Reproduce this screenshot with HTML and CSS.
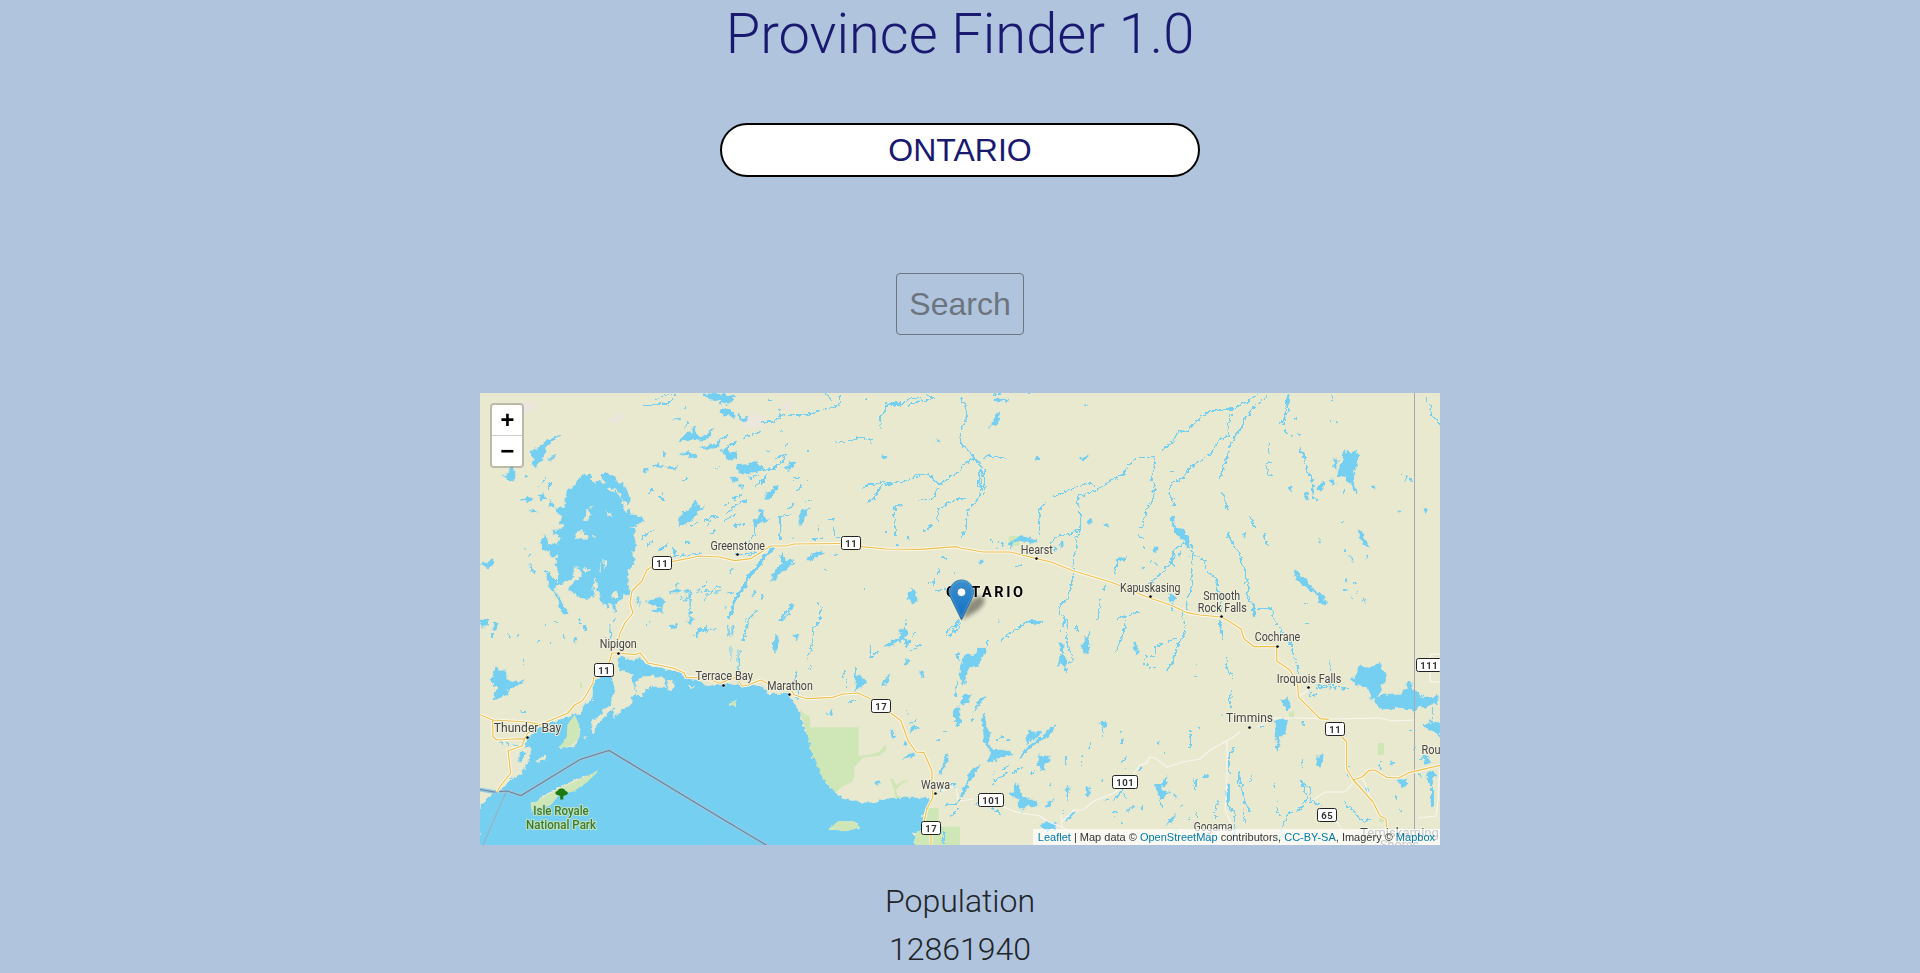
FILE: index.html
```html
<!DOCTYPE html>
<html lang="en">
<head>
<meta charset="utf-8">
<title>Province Finder 1.0</title>
<link rel="stylesheet" href="styles.css">
</head>
<body>
<main class="page">
  <h1 class="title">Province Finder 1.0</h1>
  <input class="province" type="text" value="ONTARIO" aria-label="Province">
  <button class="search" type="button">Search</button>
  <div class="map">
    <svg class="tiles" viewBox="480 393 960 452" width="960" height="452">
      <defs>
        <linearGradient id="pin" x1="0" y1="0" x2="0" y2="1"><stop offset="0" stop-color="#3b8fcb"/><stop offset="1" stop-color="#126fc6"/></linearGradient>
        <linearGradient id="rim" x1="0" y1="0" x2="0" y2="1"><stop offset="0" stop-color="#3883b7"/><stop offset="1" stop-color="#2e6c97"/></linearGradient>
        <filter id="soft" x="-50%" y="-50%" width="200%" height="200%"><feGaussianBlur stdDeviation="2.2"/></filter>
        <filter id="shore" filterUnits="userSpaceOnUse" x="470" y="383" width="980" height="472" color-interpolation-filters="sRGB">
          <feTurbulence type="fractalNoise" baseFrequency=".22" numOctaves="2" seed="4" result="n"/>
          <feDisplacementMap in="SourceGraphic" in2="n" scale="6" xChannelSelector="R" yChannelSelector="G"/>
        </filter>
      </defs>
      <!-- faint terrain patches -->
      <g class="rock">
        <path d="M508 407l22-6 8 5-14 9zM607 421l14-8 4 4-10 8zM743 422l12-10 9 6-2 9-18 1zM781 406l12-8-3 14z"/>
      </g>
      <!-- parks -->
      <g class="park">
        <path transform="translate(720 620) scale(.33333)" d="M240 272L270 292V322H416V408L450 404 476 396 494 376 500 378 496 394 476 408 430 412 404 440 402 460 404 470 396 486 366 500 346 518 310 480 280 430 262 350zM583 675L580 650 604 628 608 590 624 564H656V620H720V675zM510 478L520 476 526 490 530 496 548 482 568 480 548 490 532 504 528 512 534 528 560 534H526L522 510z"/>
        <path d="M1009 536h10v10h-10zM1378 743h6v12h-6zM1289 713l5-2v7l-5-1zM1379 818h5v4h-5z"/>
      </g>
      <g class="water" filter="url(#shore)">
        <!-- north-west -->
        <g transform="translate(480 390) scale(.33333)">
          <path class="a" fill-rule="evenodd" d="M300 262L310 252 332 256 336 276 346 280 350 270 384 284 384 300 398 308 404 302 414 314 422 320 428 340 432 352 434 374 444 358 454 374 484 380 492 396 464 404 468 412 440 414 468 418 460 440 468 464 464 480 456 484 464 506 460 520 444 548 444 584 450 606 448 616 434 610 424 628 416 632 408 640 404 666 394 644 386 636 382 656 370 638 358 626 360 606 350 600 354 580 342 560 340 600 344 616 320 628 296 620 266 598 284 572 306 560 304 540 286 530 280 560 260 574 238 580 226 590 222 606 240 620 252 650 270 674 248 672 240 650 234 624 220 602 204 590 204 564 196 544 210 546 218 566 232 580 236 540 228 512 234 496 214 500 206 484 184 480 184 456 192 434 200 440 204 466 218 458 232 466 240 440 220 430 218 420 248 420 254 404 240 396 244 374 226 368 228 354 250 352 258 328 262 296 282 286zM318 366l4-10h8l2 20-10 16-8-2zM376 364l14 6 8 8-2 6-18-12zM284 432l18-18 4 12 20 10-4 14h-16l-4-6h-16zM360 520h6l-4 26h-4zM370 510h12v16l-10 16zM392 610l20-6 4 14-10 8-14-6zM310 530l14 4 6 8-14 8zM336 438h8v6h-8zM330 350h8v6h-8z"/>
          <path class="a" d="M368 264L366 250 388 250 406 262 408 274 434 284 444 312 452 334 446 342 432 336 424 316 410 302 384 290z"/>
          <path class="a" d="M148 188l28-14 22-22 46-18-34 24-14 18-4 24-14 12-12 22-10-6 4-28zM204 216l8-18 16-4-8 14zM66 256l20-6 8-20 8 6 4 20-4 18-16-4zM124 330l20-12 16 10-14 8zM176 320l10-10 12 12-16 8zM206 350l4-22 12 14v12zM150 368l12-10 8 6zM2 522l20-4 12-10 6 14-16 12zM148 520l8 14 8 14-10-4zM490 240l12-6v12l-8 4zM520 230l16-10 16 8-14 4zM556 232h36l-16 4zM596 192l34-8 22 14-6 8zM598 406v-20l12-22 18-4 14-26 14 10 0 12 18-6-30 26-22 26zM596 152l22-22 16-6 4-14 10-4-2 24 16 14 36-26-10 22-22 14-22-8-22 6zM664 172l30-6 26-16v22l-34 4zM668 12l52-2v24l-32-8zM496 634l30-6 14-8 14 12-8 20 6 18-16-4-18-2 22-12-22-8zM568 608l12-4 10-10 14 8-20 8zM470 622l8 4-6 16zM620 620l4 10-10 2zM578 90l24-10-4 10z"/>
          <path class="b" d="M486 46h30l52-6 20-26M526 26l36-12h24M552 182v20M504 314l16-18M552 306l-14 14 16 12M604 270l18-8M484 446l34-26M500 466l20-10M534 482l26-16M582 470v26h40l44-6M632 598v90M680 574l-10 24M664 606l24-6M688 610l12-14 20-6M606 404l20-12M634 408l18-12M670 394l30-14 20 2M684 402l16-8M690 434l14-12M606 120l20-26M616 48v8M172 290l6 14M188 284l8-22M206 300l6-22M308 188h8M138 256v12M152 492v8M134 474v8M2 568h6M706 240l14-10M616 456h14"/>
        </g>
        <!-- north -->
        <g transform="translate(720 390) scale(.33333)">
          <path class="a" d="M0 14l30 4 14 0-8 14-20 10-16-4zM6 180l16-6 8 16 20-6v20l-16 6-16-4zM46 236l10-14 22 2 30-12 8 14 24 12-36 8-22 6-24-2zM0 56l22 2 20 10 4 14-20-6-14 4zM54 88v-20l12 16 18-2-6 14zM134 330v-14l18-12 12-16 12 2-24 36zM192 232l18-14 18-2-10 14-12 14zM236 408l2-30 10-22 8 4 12-8-14 28-8 22zM262 510l10-18 30-6 14 2-24 12-18 10zM34 262l10-4 8 14-14 4zM54 284h14v14zM486 194l14 2v8l-10 4zM564 610l12-14 12 10 4 30-14 6-14-18zM650 150l12 4-4 8zM160 560l8-20 18-20-4-20 8-10 6 22 22-4-10 14 22-4-30 18-16 10-12 14zM100 408l4-20 14-8v-20l12 4-2 20 18 4-20 8-18 12z"/>
          <path class="c" d="M160 472l-24 24-30 44-22 22-12 30-24 30-14 42-10 22"/>
          <path class="b" d="M120 96h40l26-18 70-4 50-10 18-12 32-6 6-32M72 142l30-8 22-10M0 148l26-14M14 176l36-22M136 184h10M172 134l14-14M178 86V54M200 158v14M264 182v6M168 204l34-14-30 44M116 240l50-4 8-12M88 264l26-10M124 280l20-26M106 286l20-16M222 268l20-6M234 300l10-18M254 272h10M38 330l28-16M14 346l14-6M18 370l40-34 20-4M14 396l30-24M42 410l32-8M104 392v40l-22 30M180 376v72M176 380l34-4M204 356l16-16M258 334h14M324 394l20-8M296 400v24M276 448l30-4M344 412v30h20M212 446h14M308 538h14M342 498l14-8M126 628v-16M82 688l28-28M182 688l34-48-10 40M292 640l12 12-4 34M324 12l8 20M140 32h14M344 158h26M388 152l34-10 32 8v10M500 36l-4 28-16 18 2 40M500 42h40l40-20h24M560 50l22-12 50-10M616 10l28 16M436 26h8M428 298l12-12 40-10 38 6 42-10 40-18h30l26 32 28-22 34-18M516 284l-36 4-16 38-22 8M652 294l-8 26-10 8h-40M720 326l-30 10-38 22v38M636 408l-26 14M548 342l-22 6-4 30 6 60M532 456v10M564 440v10M498 422v10M656 538v16M704 540v16M640 566v20M624 578h10M644 604l36-8M434 590v14M46 492l48 2 20-12M180 496l14 20M664 506h14M556 688h6"/>
        </g>
        <!-- north-centre -->
        <g transform="translate(960 390) scale(.33333)">
          <path class="a" d="M82 114l20-16 6-26 12-8-6 34zM148 458l14-10 20-4 4-6 16 6 28 4v8l-36-2-28 2-14 10zM298 460l10-6 4 16-12 4zM384 388h12v10l-10 2zM432 404h16v10h-8zM468 508l36-12-12 14-20 8zM632 382l8-6 6 6-2 30 24 8 18 24 0 26-10-6-6-18-22-14-8-20zM576 474h16l-6 12zM584 518h8v10zM626 604l14 10 8 12-14 8-6-12zM54 516l14-4v10zM226 202h10v8h-10zM360 208l20-12 6 2-14 12zM98 28h50l-8 4h-36zM280 474l12 2-6 8z"/>
          <path class="b" d="M0 26l20 16-2 46-16 30 0 40 40 44 24 24-4 86-8 14-32 38-4 46-14 30M42 204l-30 18-12 18M60 240l-8 50M72 240l2 76M48 290h34M66 204l24-6 44 4M0 324h20M36 206l20 14M372 50l10-4M284 318l44-18 60-22 18 8M410 302l-52 14-6 22 8 26v50l-10 30-2 30-8 30 2 40-6 30-8 50-30 22 2 26 22 20v24M410 302l40-28 40-20 14-26 28-26h52v20l-8 50 10 20-14 50-14 16-6 30-10 26M256 340l-18 20 0 74M360 418l-20 10-56 14-10 20M100 14l22-2M206 10h8M606 182l32-26 16-30 26-4 42-38M720 214l-30 18-24 34-30 12-8 24 14 46M634 244h10M538 426v14h10M548 474h8M574 514v4M546 534h8M472 520l-10 36M676 458l-32 18-10 40 8 10M692 460l6 50-4 90-10 20-6 40M698 500h22M648 500l-16 16-30 36-36 30M660 490l4 14M436 586l-8 18M418 628v34l-6 24M470 688l30-12 44-12M92 450l8 12M112 434l0 44M130 454v14M150 458v16M172 528l12-4M636 640v20M668 660v28M110 688h8"/>
        </g>
        <!-- north-east -->
        <g transform="translate(1200 390) scale(.33333)">
          <path class="a" d="M412 258l6-26 12-16v-32l6-8 0 18 8-14 8 8 4 4 14-12 4 20-2 30-10 8-2 40 10 18-2 18-6-8-6-22-14-8v-20l-8 4zM400 232l4-26 8 4-4 30zM390 268l10-4 4 14-6 12zM354 290l12-16 6 4-4 16-8 14-6-6zM312 304l8 2 6 24-8 4zM474 416l8 8 10 14 14 34-12-4-12-22zM282 542l10 4 8 10 18 12 16 22 12 10 4 12 12-8 10 20 6 18-14 2-8-10v-14l-28-20-18-14-20-16zM264 292h12v12h-8zM434 476h6v14l-8-2zM448 496l12 16v6zM354 444l6 14h6zM514 288h10v8h-8zM594 360h8v6h-8zM672 356h10v8h-10zM126 432l10-4v16zM490 628l6 4v10z"/>
          <path class="b" d="M0 80l28-14 36-8 38-2 38-20 32-24M202 14l-36 36-30 34-16 34-34 54-6 40-18 40-6 18M92 68l-6 30v36l-30 20-26 38-30 20M264 12l-8 42-4 48M264 12v54l-26 38M394 14l6 20M388 88v12M408 94h6M284 84l8 10M256 120v12M276 138l6-2M288 122l12 16M204 164l10 28M212 214l-14 8 6 32h18M296 172l18 24 6 50 14 14 6 30-2 30 8 10h8M64 298l10 30 10 34M150 380l18 34M190 432l10 30 8 10M222 478h6M82 430l20 40 18 20 8 36 10 16v36l6 20-2 24 20 22v36M84 428v12M168 658l42-4 10 14v20M0 508l16 4 4 36 20 12 14 20-2 20 12 20v40M136 560l10 10v40M158 640v40M426 402l8-16M432 296v16M604 248v10M624 254l-10 24M630 270h6M672 12l16 28 6 30 26 34M436 566v14M430 600h14M460 576l8 6M470 600v14M456 620v8M498 498v8M312 642l12-6"/>
        </g>
        <!-- lakes north of the Superior shore -->
        <g transform="translate(600 393) scale(.33333)">
          <path class="a" d="M262 690l10-22 8 12-6 16zM524 780l-4-26 8-24 6 20-4 20zM582 728l10-4v16zM252 594l10-6 6 8-8 10zM508 566l10-16 12-14 0 22z"/>
          <path class="b" d="M226 580l10-10M240 622l8-14M292 600l8-14M312 620l20-24M340 590l20-14M386 540l12-10M380 600h20M220 690l12 8M286 736l8-20 24-4M320 712l28-8M455 614l12-22M378 640l-5 8M472 650l-28 34-16 64M576 630l-12 34-24 20M120 625v14M30 690v30M392 760v40M414 770v50l4 50M385 700v30l12-6v-26M150 690v-8M344 604l16-16M270 590v80"/>
        </g>
        <!-- south-west -->
        <g transform="translate(480 620) scale(.33333)">
          <path class="a" fill-rule="evenodd" d="M0 680V556L36 526 66 510 92 480 120 464 138 440 150 412 156 384 144 376 130 382 148 350 180 322 240 300 280 284 284 310 298 330 296 350 290 372 272 382 236 384 262 354 268 330 268 318 284 284 306 280 312 256 336 238 340 220 336 190 350 176 372 170 388 156 392 164 402 200 404 216 392 240 392 254 372 266 356 290 336 306 332 328 340 342 352 318 366 300 392 268 404 264 398 296 408 290 420 274 440 262 458 250 456 232 466 222 468 196 456 176 460 164 440 156 420 146 414 118 430 110 434 118 460 122 478 112 492 130 530 142 574 150 608 160 614 178 650 180 682 200 720 192V680zM466 186L480 170 520 166 556 176 560 204 530 204 512 198 490 218 484 230 468 228zM562 180L576 178 586 200 580 212 560 206zM168 418L194 406 200 418 172 426zM308 362L320 348 318 360zM156 574L152 552 212 514 270 486 356 452 322 486 282 514 238 524 212 556zM624 196l34 6-30 4z"/>
          <path class="a" d="M48 138l10 14h20l2 24 24 12 32-10-26 20-26 12 0 18-20 0-24 14 2-20 10-14-18-24zM110 426l16-30 12 4-16 28zM0 0h24l-10 24-12-6zM40 6l14 6-2 20-10-6zM278 56h12l-4 12zM568 16h22v8h-12zM620 4h16v12z"/>
          <path class="b" d="M224 4h16M196 12v8M250 46l8 10M212 66v10M174 58v12M80 40l12 8M110 48h10M36 40v12M130 120v14M122 276h12M300 0l4 16M314 14l2 20M392 30v24M380 50v20M404 0v10M646 54l8-24 26-6M500 10v18M50 368l40 4M100 374l26 6"/>
        </g>
        <!-- south -->
        <g transform="translate(720 620) scale(.33333)">
          <path class="a" fill-rule="evenodd" d="M-2 190L60 196 100 192 140 212 144 224 200 220 212 236 230 262 240 278 246 310 262 350 274 400 290 436 310 480 346 518 372 538 420 548 470 548 500 536 550 534H624L636 544 610 578 604 628 580 640 584 682H-2zM26 252l10-10 14 2-4 16zM326 628l28-24h48l18 18-40 12z"/>
          <path class="a" d="M408 180l6-16 8 10 18 4-4 14-24 14-8 14zM492 78l26-16 24-6-4-24 10-2 8-8 6 8-4 28-22 4-20 16zM162 96l-2-26 10-26 4 20-2 20zM484 200l10-24 16-12-14 34zM602 148l8 4 2 22-8-4zM512 334h12l0 20h-8zM550 372l10-6v12zM544 416l20-12 26-8-12 14zM570 336l8-18 18 4zM312 284l16-4 8-14v18zM462 486l14-4 4 8-12 4zM656 466l12-26 4-22 10-24v30l-12 26zM700 276l8-14 12 2v50l-10 4zM556 50v30l16-12zM552 130l10-16 2 20zM220 48l10-4v16z"/>
          <path class="b" d="M82 0l-6 30-4 34M60 94l-4 46M296 4l-16 20-4 56-16 34M268 134v12M274 76v20M228 160v20l8 44-4 20M376 150l-6 20M380 180v24M408 142v40M384 248l20-8M452 74v36l20-14M556 10v16M584 36l-10 18M582 76h24M572 90l20-4M676 54l44-34M706 20l14-8M714 100v20M714 182l-10 50M584 290h10M562 270v14M648 360l10-4M668 334h16M574 310l14-12M520 256h10M676 556l28-4 14-12M690 594l26-30M660 512l30-22 20 10M664 624v14h8v34"/>
        </g>
        <!-- south-centre -->
        <g transform="translate(960 620) scale(.33333)">
          <path class="a" d="M0 150l8-18v-20l16-10 18 4 12-20 26-2-6 18-14 18-2 18-20 0-16 16-8 20 6 18h-12l-8-20zM294 136l8-30-2-36 10 4-2 26 12 24-10 16-6-10zM362 76l10-6 6-20 10 10 2 20-10 22-8-6zM520 68l10-2 4 40-8-8zM0 250l12-24 20-4-8 20-16 16zM40 280l20-48 20-2-20 22zM66 282l8-4 4 40 12 22-4 34 16 14 48 6 8 10-20 4-30 4-8 14-20-4 14-20-12-22-10-14zM180 416l20-34 50-34 20-20 20-16-18 30-24 16-36 24zM198 374l0-18 10-30 10 14 30-8-16 20-20 10zM0 530l10-24 10-20 6-26 36-28-20 36-14 14-12 40zM230 430l10-28 6 10 22-4v18l-14 6-6 22-10-14zM150 518l16-4v-26l12 14-2 18 20 12 38 14v12l-34-2-22 14-4-14 6-20-24-4zM420 308l18-4v12l-10 8zM376 524l6-26 10 4-6 30zM582 494h20l18-24 0 20-16 14 10 14 16-6-24 22-6 0zM312 610l18-30 20-8-20 26zM258 562l10-16 14-10-10 20zM244 620l12-10 10-8 20 8 4 20-16-8-12 12zM314 500h14v18l-12-4zM618 616l14-20 14-14-10 24zM534 456l8-16 4 6zM640 520l10 14h-8zM498 574l20-20-8 20z"/>
          <path class="b" d="M0-2l-6 10-38 34M122 62l20-16 40-26 10-14h54M110 10l10-8M84 60v14M312 0v14l-8 18M316 40l10 50 12 24-14 26M348 16l6 16M390 30l-6 30M498 0l-6 34-16 40-10 26M672 0l4 40-20 30-14 30v20l-20 36M648 52l-22 12M610 74l-24 4v24M556 108v8M574 106h12M552 132l12-4M568 144l20-4M708 134h12M706 170h8M318 140v18M0 300v14M34 300h14M110 360l20-8M144 354v10M92 420l20-4M130 446l16-14M156 460l34-20M96 494l16-20 18-6 12-14M100 452v16M98 564l24 20M176 578h14M368 408v30M320 404v30M384 382l10-14M428 314v34M480 330v10M486 358v14M484 428l20-22M488 446h10M426 480v6M462 542l26-34M492 516l6 20M214 460l8-4M266 500l10-6M322 494v50M314 570v10M436 538h12M456 578h18M462 584v4M482 610h12M516 560h6M546 556v12M602 530v40M692 330v50l-8 4M710 324h8M614 406v-12M590 372h8M700 474v30l12 8M708 480v20M664 556h6M710 574v20M644 630h16M686 590l10 10M42 554l12-8"/>
        </g>
        <!-- south-east -->
        <g transform="translate(1200 620) scale(.33333)">
          <path class="a" d="M452 182L472 164 474 142 484 132 498 146 510 138 540 130 544 146 558 164 554 188 540 198 544 210 530 228 548 226 574 222 598 226 604 212 620 208V190L630 180 640 210 664 224 674 236 712 224V250L690 254 680 264 660 254 648 266 640 274 620 268 600 262 566 270 530 262 526 236 512 238 510 208 488 202zM226 304l14-8 26 2-4 20-10 26-14 6v24l-6 20v-30l-8-18zM242 240l20-10 8 20-4 22-14-12zM348 436l6-30 16-4-2 22-8 14zM590 476l30 0v18l-12 12zM672 316l20-4-2-10 30 10v40l-14-14zM678 460l20-8 10 10-14 40zM492 506l14-2v12h-8zM568 428l16-2-2 8zM668 404l14 4 8 20-16 6z"/>
          <path class="b" d="M58 0l10 46v14M222 0l20 30 24 20 14 54 14 40-4 22M384 122l10 30 6 16M80 108v34l18 24v6M98 206l-10 34 6 20M180 322l10-4M330 210l2 20 24-14M350 196l40-4 20 10 36 4M350 202l40-2 20 8M316 10h10M0 130M306 306l10 8M540 430v20M630 326v8M700 260v44M640 378v16M696 500v60M104 380l-10 14-10 20M88 400v66M84 490v60l20 26v40l-10 50M80 520l12 60M114 454l8 30 14 70 18 18M116 454v40l10 10M148 490l10-24M224 486v20M232 546v40h8M58 540l-16 34 6 20M304 420v24M306 484l14 50-26 40h-22M310 490l22 20v34M250 620l10-30 12-16M244 620v30l-10 20M334 544l30 14M432 544l36 40 26 22 18-10M600 572h14M588 526v10M10 468h16M28 356v14M62 284h8M446 438v30M130 560v34l10 16M228 650h10M656 418l24-6M654 460l10 14"/>
        </g>
      </g>
      <g class="park" transform="translate(480 620) scale(.33333)">
        <path d="M284 284L298 314 296 354 272 378 236 384 260 354 262 314zM156 574L152 554 212 520 270 492 356 452 322 486 282 514 238 524 212 556zM300 185h6v20h-6zM745 252l20-8 4 14zM1046 628l28-24h48l18 18-40 12z"/>
      </g>
      <!-- borders -->
      <path class="border-halo" d="M480 789.500L494 792 507 791 521 795.500 580 759.500 609 750.500 720 817.500 767 845.500"/>
      <path class="border" d="M480 789.500L494 792 507 791 521 795.500 580 759.500 609 750.500 720 817.500 767 845.500"/>
      <path class="border faint" d="M506 792L483 845M1414.500 393V845"/>
      <!-- minor roads -->
      <path class="minor" d="M960 801L973 799M1004 807L1016 812 1040 816 1049 822 1064 828 1080 840M1062 828L1061 815M1062 822L1074 810 1083 810 1094 801 1112 794 1120 789M1132 776L1140 765 1147 763 1149 757 1155 758 1167 767 1183 762 1200 759 1210 750 1232 738 1240 732M1257 727L1275 718 1300 718 1330 719 1380 718 1392 721 1414 720M1313 800L1325 792 1345 792 1353 783M1363 778L1371 800M1227 740V780L1225 810 1232 825M1331 814L1342 829M942 791L956 786 958 800M1440 654H1430V682H1440M1440 768L1438 800 1436 816 1418 818M1299 696L1309 690"/>
      <!-- highways -->
      <g class="road-group">
        <g id="roads">
          <path d="M480 714.700L492.700 720 493 737 497 740 513 739 524.700 738.700M492.700 720L528 722 540 724.700M524.700 738.700L528 733 540 724.700 568 713 574.700 705 582 701 585 697 593 683 594 677M524.700 738.700L522 746 508 750.700 510.700 773 500 786.700 496.700 792M609 663L612 653 619 653 635 654.700 640 652.700 648 663 673 668 684 672.700 686 677.300 705 678 720 683.300 736 677 742 686 748 685 761 680 770 685 790 688 794 694.700 806.700 698.700 833 697.300 843 694 858 693 871 699M890.700 713L901 720.700 908 740.700 916 752 924 752.700 932 770.700 932 786.700 933 796.700 927 808.700 924 821M931 835V845"/>
          <path d="M618 643L620 633 625 623 633 613 630 603 632 591 642 581 646.700 570 652 566.700M672 561.700L700 556 720 557 734.700 560.700 750.700 558.700 770.700 546 786.700 546 794 544 840 543.500M861 546.700L886.700 549 920 549.300 956.700 546.700 960 548 983 552 1010 552 1036.700 558.700 1051 562 1073 570.700 1113 582.700 1127 589 1150 598 1173 606 1187 612.700 1200 615 1221 617 1227 620 1241 629 1244 638.700 1254 646.700H1276.700V661L1290 670 1297.300 683 1298.700 697.300 1320 718.700 1328.700 719.300M1342 737L1346.700 742V768.700L1353.300 780 1373 802 1380 816 1386 819 1386.700 830M1353.300 780L1362 777 1368.700 770.700 1374.700 770 1386.700 777.300 1398.700 778 1408.700 772.700 1440 765.300"/>
        </g>
        <use class="core" href="#roads"/>
      </g>
      <!-- route shields -->
      <g class="shield">
        <rect x="652.500" y="556.500" width="19" height="13" rx="2"/><text x="662.300" y="566.700">11</text>
        <rect x="841.500" y="536.500" width="19" height="13" rx="2"/><text x="851.300" y="546.700">11</text>
        <rect x="594.500" y="663.500" width="19" height="13" rx="2"/><text x="604.300" y="673.700">11</text>
        <rect x="871.500" y="699.500" width="19" height="13" rx="2"/><text x="881.300" y="709.700">17</text>
        <rect x="921.500" y="821.500" width="19" height="13" rx="2"/><text x="931.300" y="831.700">17</text>
        <rect x="978.500" y="793.500" width="25" height="13" rx="2"/><text x="991.300" y="803.700">101</text>
        <rect x="1112.500" y="775.500" width="25" height="13" rx="2"/><text x="1125.300" y="785.700">101</text>
        <rect x="1325.500" y="722.500" width="19" height="13" rx="2"/><text x="1335.300" y="732.700">11</text>
        <rect x="1317.500" y="808.500" width="19" height="13" rx="2"/><text x="1327.300" y="818.700">65</text>
        <rect x="1416.500" y="658.500" width="25" height="13" rx="2"/><text x="1429.300" y="668.700">111</text>
      </g>
      <!-- places -->
      <g class="place">
        <text x="737.700" y="550" textLength="54.500" lengthAdjust="spacingAndGlyphs">Greenstone</text>
        <text x="1036.800" y="553.700" textLength="32" lengthAdjust="spacingAndGlyphs">Hearst</text>
        <text x="1150.300" y="592" textLength="60.500" lengthAdjust="spacingAndGlyphs">Kapuskasing</text>
        <text x="1221.700" y="599.700" textLength="37" lengthAdjust="spacingAndGlyphs">Smooth</text>
        <text x="1222.300" y="611.700" textLength="49" lengthAdjust="spacingAndGlyphs">Rock Falls</text>
        <text x="618.300" y="648" textLength="37" lengthAdjust="spacingAndGlyphs">Nipigon</text>
        <text x="724.200" y="680.300" textLength="57.500" lengthAdjust="spacingAndGlyphs">Terrace Bay</text>
        <text x="790" y="689.700" textLength="45.500" lengthAdjust="spacingAndGlyphs">Marathon</text>
        <text class="city" x="527.500" y="731.700" textLength="67.500" lengthAdjust="spacingAndGlyphs">Thunder Bay</text>
        <text x="935.500" y="788.700" textLength="29" lengthAdjust="spacingAndGlyphs">Wawa</text>
        <text x="1277.500" y="641" textLength="45.500" lengthAdjust="spacingAndGlyphs">Cochrane</text>
        <text x="1309" y="682.700" textLength="64.500" lengthAdjust="spacingAndGlyphs">Iroquois Falls</text>
        <text class="city" x="1249.500" y="722" textLength="47" lengthAdjust="spacingAndGlyphs">Timmins</text>
        <text x="1431" y="754.300" textLength="19" lengthAdjust="spacingAndGlyphs">Rou</text>
        <text x="1213.200" y="831.300" textLength="39" lengthAdjust="spacingAndGlyphs">Gogama</text>
        <text class="city" x="1399.500" y="836.500" textLength="79" lengthAdjust="spacingAndGlyphs">Temiskaming</text>
        <text class="city" x="1399.500" y="849" textLength="39" lengthAdjust="spacingAndGlyphs">Shores</text>
        <text class="green" x="561" y="815" textLength="55.500" lengthAdjust="spacingAndGlyphs">Isle Royale</text>
        <text class="green" x="561" y="829.300" textLength="70" lengthAdjust="spacingAndGlyphs">National Park</text>
        <text class="region" x="984.500" y="597" textLength="77">ONTARIO</text>
      </g>
      <path class="tree" d="M560.200 799.500v-3.500l-2.700-1c-3-.5-2.500-4 0-4 .5-2 2.500-2.500 4-2.500s3.500.5 4 2.500c3 .5 3 3.500.5 4l-2.700 1v3.500z"/>
      <g class="dots">
        <circle cx="737.500" cy="554.500" r="1.600"/><circle cx="1036.500" cy="558.500" r="1.600"/><circle cx="1150.500" cy="596.500" r="1.600"/><circle cx="1221.500" cy="616.500" r="1.600"/><circle cx="618.500" cy="653.500" r="1.600"/><circle cx="723.500" cy="685.500" r="1.600"/><circle cx="789.500" cy="694.500" r="1.600"/><circle cx="527.500" cy="737.500" r="1.600"/><circle cx="935.500" cy="793.500" r="1.600"/><circle cx="1277.500" cy="646.500" r="1.600"/><circle cx="1308.500" cy="687.500" r="1.600"/><circle cx="1249.500" cy="727.500" r="1.600"/>
      </g>
      <!-- marker -->
      <path class="shadow" filter="url(#soft)" d="M962 620l5-14c5-8 13-12 17-8 3 4-4 12-12 16z"/>
      <g transform="translate(949 579.500)">
        <path fill="url(#pin)" stroke="url(#rim)" d="M12.500.500C5.900.500.500 6 .500 12.800c0 3 1 5 2.200 7.500L12.500 40.300l9.800-20c1.200-2.500 2.200-4.500 2.200-7.500C24.500 6 19.100.500 12.500.500z"/>
        <path class="glint" d="M12.500 1.700C6.600 1.700 1.700 6.600 1.700 12.800c0 2.700.9 4.500 2.100 7l8.700 17.700 8.700-17.700c1.200-2.500 2.100-4.300 2.100-7C23.300 6.600 18.400 1.700 12.500 1.700z"/>
        <circle class="hole" cx="12.500" cy="12.700" r="4.300"/>
      </g>
    </svg>
    <div class="zoom">
      <a class="zoom-btn">+</a>
      <a class="zoom-btn">−</a>
    </div>
    <div class="attribution"><a>Leaflet</a> | Map data © <a>OpenStreetMap</a> contributors, <a>CC-BY-SA</a>, Imagery © <a>Mapbox</a></div>
  </div>
  <div class="stats">
    <p>Population</p>
    <p>12861940</p>
  </div>
</main>
</body>
</html>
```
FILE: styles.css
```css
* { box-sizing: border-box; }
html, body { height: 100%; }
body {
  margin: 0;
  overflow: hidden;
  background: #b0c4de;
  color: #212529;
  font-family: Roboto, sans-serif;
  font-weight: 300;
}
.page { display: flex; flex-direction: column; align-items: center; }
.title {
  margin: 0 0 54px;
  color: #191970;
  font-size: 56px;
  font-weight: 300;
  line-height: 69px;
}
.province {
  width: 480px;
  height: 54px;
  padding: 0;
  border: 2px solid #000;
  border-radius: 27px;
  background: #fff;
  color: #191970;
  font: 32px "Liberation Sans", sans-serif;
  text-align: center;
}
.search {
  height: 62px;
  margin: 96px 0 58px;
  padding: 6px 12px;
  border: 1px solid #6c757d;
  border-radius: 4px;
  background: transparent;
  color: #6c757d;
  font: 32px/48px "Liberation Sans", sans-serif;
}
.map {
  position: relative;
  width: 960px;
  height: 452px;
  overflow: hidden;
  background: #e9e9d0;
}
.tiles { display: block; }

.rock { fill: #ece6dc; }
.park { fill: #cfe7b6; }
.water { shape-rendering: crispEdges; stroke-linejoin: round; }
.water .a { fill: #75cff0; stroke: #75cff0; stroke-width: 1.5; }
.water .b, .water .c { fill: none; stroke: #75cff0; stroke-width: 4; }
.water .c { stroke-width: 10; }
.border { fill: none; stroke: #74839b; stroke-width: 1.2; }
.border.faint { stroke: #a3a8b3; stroke-width: 1; }
.border-halo { fill: none; stroke: #8fcbe4; stroke-width: 4; }
.minor { fill: none; stroke: #f8f6f0; stroke-width: 1.1; }
.road-group { fill: none; stroke: #fdf9ec; stroke-width: 3; stroke-linejoin: round; }
.road-group .core { stroke: #ebc04f; stroke-width: 1.2; }

.shield rect { fill: #fff; stroke: #222; }
.shield text {
  fill: #333;
  font: 700 9.5px Roboto, sans-serif;
  letter-spacing: .5px;
  text-anchor: middle;
}
.place text {
  fill: #444;
  stroke: #f2f0df;
  stroke-width: 2px;
  stroke-linejoin: round;
  paint-order: stroke;
  font: 400 12px Roboto, sans-serif;
  text-anchor: middle;
}
.place .city { font-size: 13px; }
.place .green { fill: #3d7a2c; stroke: #bfe2c4; font-weight: 500; }
.place .region { fill: #000; font-weight: 700; font-size: 14.5px; }
.dots { fill: #000; stroke: #fff; stroke-width: .5; }
.tree { fill: #1d7a12; }
.road-group .core { stroke: #ebc04f; stroke-width: 1.2; }
.shadow { fill: #000; opacity: .4; }
.glint { fill: none; stroke: #fff; stroke-opacity: .15; }
.hole { fill: #fff; stroke: #2d71a4; stroke-width: .8; }

.zoom {
  position: absolute;
  top: 10px;
  left: 10px;
  border: 2px solid rgba(0, 0, 0, .2);
  border-radius: 4px;
  background-clip: padding-box;
}
.zoom-btn {
  display: block;
  width: 30px;
  height: 30px;
  background: #fff;
  color: #000;
  font: bold 24px/34px "Liberation Mono", monospace;
  text-align: center;
  text-indent: 1px;
}
.zoom-btn:first-child { height: 31px; border-bottom: 1px solid #ccc; border-radius: 2px 2px 0 0; }
.zoom-btn:last-child { border-radius: 0 0 2px 2px; }
.attribution {
  position: absolute;
  right: 0;
  bottom: 0;
  padding: 0 5px;
  background: rgba(255, 255, 255, .7);
  color: #333;
  font: 400 11px/16px "Liberation Sans", sans-serif;
}
.attribution a { color: #0078a8; }
.stats { margin-top: 32px; font-size: 32px; line-height: 48px; text-align: center; }
.stats p { margin: 0; }
```
